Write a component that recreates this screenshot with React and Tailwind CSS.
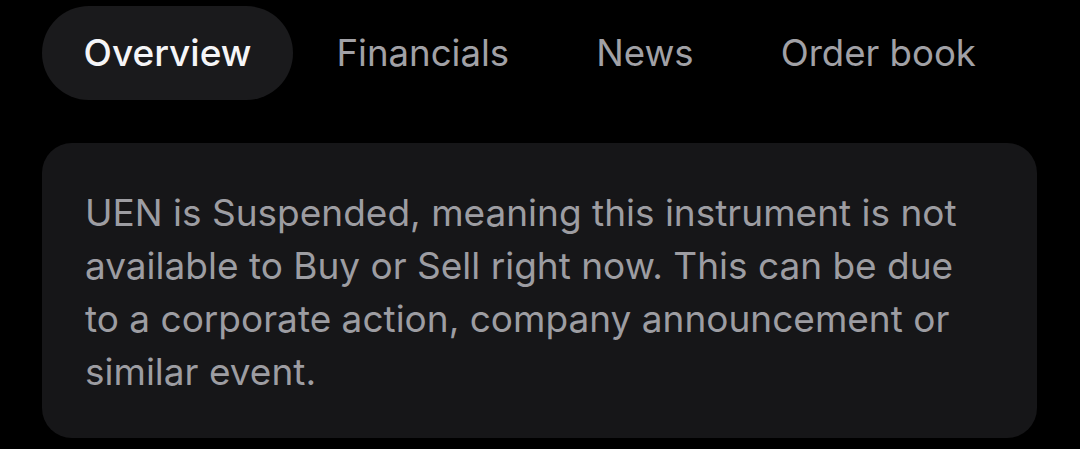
export default function App() {
  const tabs = ["Overview", "Financials", "News", "Order book"];
  return (
    <div className="w-[1080px] h-[449px] bg-black overflow-hidden" style={{ fontFamily: "Inter, 'Noto Sans', sans-serif" }}>
      <div className="flex pl-[42px] pt-[6px]">
        {tabs.map((t, i) => (
          <div
            key={t}
            className={
              i === 0
                ? "h-[94px] w-[251px] flex items-center justify-center rounded-full bg-[#1a1a1c] text-[#f5f5f7] text-[37px] font-medium"
                : "h-[94px] px-[43.5px] flex items-center text-[#a1a1a6] text-[36.6px] font-normal"
            }
          >
            {t}
          </div>
        ))}
      </div>
      <div className="mx-[42px] mt-[43px] w-[995px] h-[295px] rounded-[30px] bg-[#161618] pl-[43px] pr-[60px] pt-[43px]">
        <p className="text-[37px] leading-[53px] text-[#9d9da2]">
          UEN is Suspended, meaning this instrument is not available to Buy or Sell right now. This can be due to a corporate action, company announcement or similar event.
        </p>
      </div>
    </div>
  );
}
